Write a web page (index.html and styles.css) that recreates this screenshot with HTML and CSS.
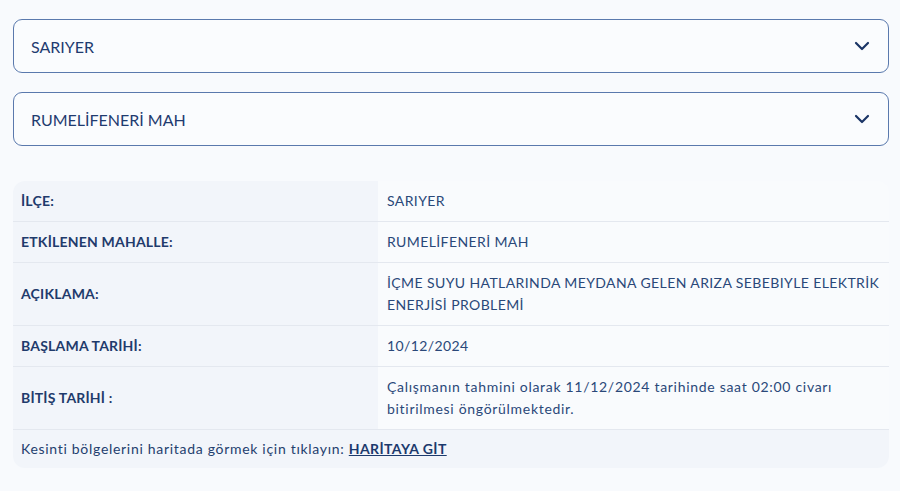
FILE: index.html
```html
<!DOCTYPE html>
<html lang="tr">
<head>
<meta charset="utf-8">
<title>Kesinti Bilgisi</title>
<link rel="stylesheet" href="styles.css">
</head>
<body>
<main class="page">
  <div class="select">
    <span class="select-text">SARIYER</span>
    <svg class="chevron" width="16" height="10" viewBox="0 0 16 10"><path d="M2 2l6 6 6-6" fill="none" stroke="currentColor" stroke-width="2.2" stroke-linecap="round" stroke-linejoin="round"/></svg>
  </div>
  <div class="select">
    <span class="select-text">RUMELİFENERİ MAH</span>
    <svg class="chevron" width="16" height="10" viewBox="0 0 16 10"><path d="M2 2l6 6 6-6" fill="none" stroke="currentColor" stroke-width="2.2" stroke-linecap="round" stroke-linejoin="round"/></svg>
  </div>

  <table class="info">
    <tbody>
      <tr><th>İLÇE:</th><td>SARIYER</td></tr>
      <tr><th>ETKİLENEN MAHALLE:</th><td>RUMELİFENERİ MAH</td></tr>
      <tr><th>AÇIKLAMA:</th><td>İÇME SUYU HATLARINDA MEYDANA GELEN ARIZA SEBEBIYLE ELEKTRİK ENERJİSİ PROBLEMİ</td></tr>
      <tr><th>BAŞLAMA TARİHİ:</th><td>10/12/2024</td></tr>
      <tr><th>BİTİŞ TARİHİ :</th><td class="prose">Çalışmanın tahmini olarak 11/12/2024 tarihinde saat 02:00 civarı bitirilmesi öngörülmektedir.</td></tr>
      <tr class="foot"><td class="prose" colspan="2">Kesinti bölgelerini haritada görmek için tıklayın: <a href="#">HARİTAYA GİT</a></td></tr>
    </tbody>
  </table>
</main>
</body>
</html>
```
FILE: styles.css
```css
html, body {
  margin: 0;
  background: #f8fafd;
}

body {
  font-family: Lato, "Open Sans", sans-serif;
  color: #22406f;
}

.page {
  padding: 19px 11px 0 13px;
  display: flex;
  flex-direction: column;
}

.select {
  height: 54px;
  box-sizing: border-box;
  border: 1px solid #5a79ad;
  border-radius: 9px;
  background: #fafcfe;
  display: flex;
  align-items: center;
  justify-content: space-between;
  padding: 0 18px 0 17px;
  margin-bottom: 19px;
}

.select-text {
  font-size: 16px;
  color: #1f3b70;
}

.chevron {
  color: #1a3566;
}

.info {
  margin-top: 16px;
  width: 100%;
  border-collapse: separate;
  border-spacing: 0;
  font-size: 14px;
  letter-spacing: 0.4px;
  line-height: 22px;
  border-radius: 12px;
  overflow: hidden;
}

.info th,
.info td {
  padding: 9px 8px;
  border-bottom: 1px solid #e4e8ef;
  text-align: left;
  vertical-align: middle;
}

.info th {
  width: 349px;
  background: #f2f5fa;
  font-weight: 700;
  letter-spacing: 0.2px;
  color: #1f3b6c;
}

.info td {
  background: #f9fbfd;
  color: #2a4879;
  padding-left: 9px;
  padding-right: 5px;
}

/* sentence-case text runs a little wider */
.info td.prose {
  letter-spacing: 0.7px;
}

.info .foot td {
  background: #f2f5fa;
  border-bottom: none;
  padding: 8px 8px;
  color: #24406e;
}

.info .foot a {
  color: #1c3a6d;
  font-weight: 700;
  letter-spacing: 0.4px;
  text-decoration: underline;
}
```
